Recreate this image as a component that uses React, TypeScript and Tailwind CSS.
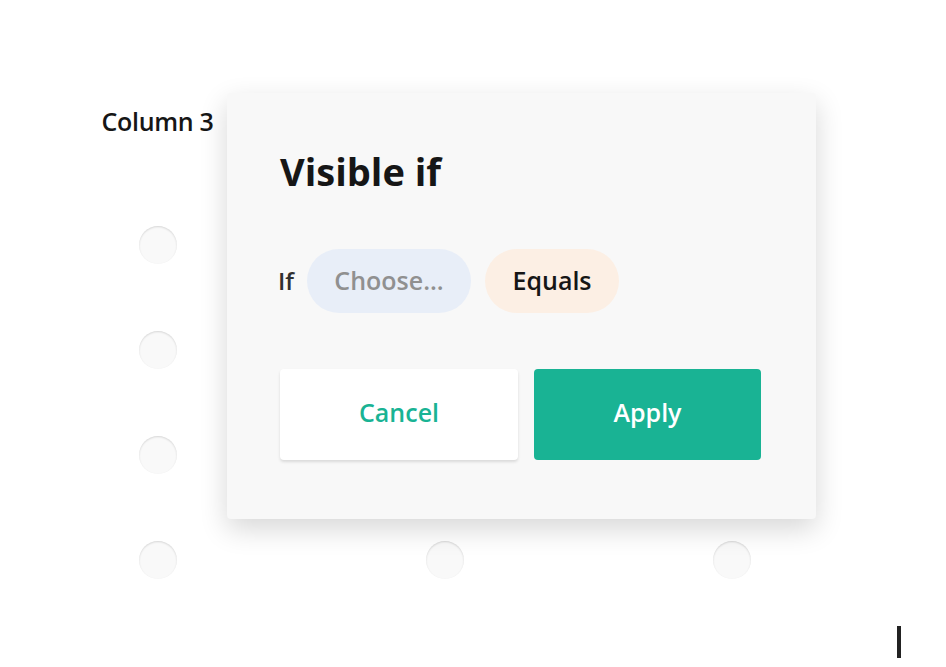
const FONT = { fontFamily: '"Open Sans", "Noto Sans", sans-serif' };

const ROWS = [0, 1, 2, 3];
const COLS = ['Column 3', '', ''];

function Radio() {
  return (
    <div className="h-[38px] w-[38px] rounded-full bg-[#f9f9f9] shadow-[inset_0_1px_2px_rgba(0,0,0,0.14)]" />
  );
}

export default function App() {
  return (
    <div className="relative h-[667px] w-[946px] overflow-hidden bg-white text-[#161616]" style={FONT}>
      {/* Matrix behind the popup */}
      <div className="pl-[14px] pt-[98px]">
        <div className="grid grid-cols-[287px_287px_287px]">
          {COLS.map((c, i) => (
            <div key={i} className="flex h-[48px] items-center justify-center text-[25px] font-semibold tracking-[-0.3px]">
              {c}
            </div>
          ))}
        </div>
        <div className="mt-[46px]">
          {ROWS.map((r) => (
            <div key={r} className="grid h-[105px] grid-cols-[287px_287px_287px]">
              {COLS.map((_, i) => (
                <div key={i} className="flex items-center justify-center">
                  <Radio />
                </div>
              ))}
            </div>
          ))}
        </div>
      </div>

      {/* Visible if popup */}
      <div className="absolute left-[227px] top-[93px] w-[589px] rounded-[4px] bg-[#f8f8f8] px-[53px] pb-[59px] pt-[54px] shadow-[0_10px_28px_rgba(0,0,0,0.16)]">
        <h2 className="text-[38px] font-bold leading-[48px]">Visible if</h2>
        <div className="mt-[54px] flex items-center">
          <span className="mr-[13px] ml-[-2px] text-[24px] font-semibold text-[#303030]">If</span>
          <div className="flex h-[64px] w-[164px] items-center justify-center rounded-full bg-[#e8eef8] text-[25px] font-semibold text-[#909090]">
            Choose...
          </div>
          <div className="ml-[14px] flex h-[64px] w-[134px] items-center justify-center rounded-full bg-[#fcefe4] text-[25px] font-semibold text-[#161616]">
            Equals
          </div>
        </div>
        <div className="mt-[56px] flex gap-[16px]">
          <button className="flex h-[91px] w-[238px] items-center justify-center rounded-[4px] bg-white pb-[3px] text-[25px] font-semibold text-[#19b394] shadow-[0_2px_3px_rgba(0,0,0,0.12)]">
            Cancel
          </button>
          <button className="flex h-[91px] w-[227px] items-center justify-center rounded-[4px] bg-[#19b394] pb-[3px] text-[25px] font-semibold text-white">
            Apply
          </button>
        </div>
      </div>

      {/* Text caret */}
      <div className="absolute left-[897px] top-[626px] h-[32px] w-[4px] bg-[#222]" />
    </div>
  );
}
